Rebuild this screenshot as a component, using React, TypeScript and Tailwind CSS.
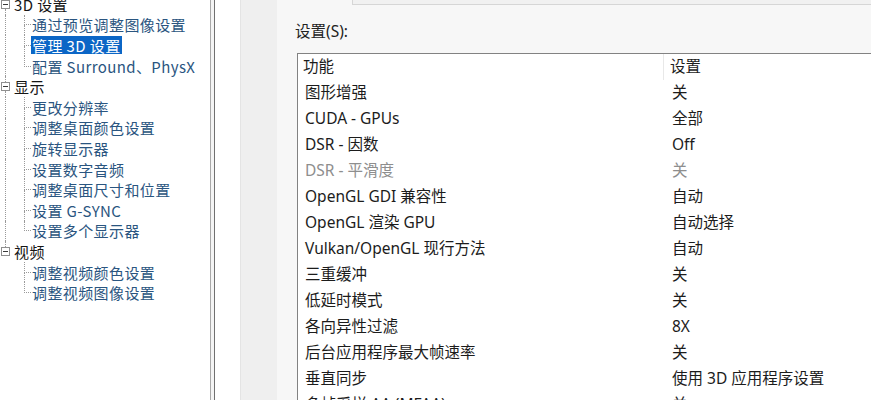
import React from "react";

type TreeRow = {
  label: string;
  root?: boolean;
  lastRoot?: boolean;
  lastChild?: boolean;
  selected?: boolean;
};

const tree: TreeRow[] = [
  { label: "3D 设置", root: true },
  { label: "通过预览调整图像设置" },
  { label: "管理 3D 设置", selected: true },
  { label: "配置 Surround、PhysX", lastChild: true },
  { label: "显示", root: true },
  { label: "更改分辨率" },
  { label: "调整桌面颜色设置" },
  { label: "旋转显示器" },
  { label: "设置数字音频" },
  { label: "调整桌面尺寸和位置" },
  { label: "设置 G-SYNC" },
  { label: "设置多个显示器", lastChild: true },
  { label: "视频", root: true, lastRoot: true },
  { label: "调整视频颜色设置", lastRoot: true },
  { label: "调整视频图像设置", lastRoot: true, lastChild: true },
];

const settings: { name: string; value: string; disabled?: boolean }[] = [
  { name: "图形增强", value: "关" },
  { name: "CUDA - GPUs", value: "全部" },
  { name: "DSR - 因数", value: "Off" },
  { name: "DSR - 平滑度", value: "关", disabled: true },
  { name: "OpenGL GDI 兼容性", value: "自动" },
  { name: "OpenGL 渲染 GPU", value: "自动选择" },
  { name: "Vulkan/OpenGL 现行方法", value: "自动" },
  { name: "三重缓冲", value: "关" },
  { name: "低延时模式", value: "关" },
  { name: "各向异性过滤", value: "8X" },
  { name: "后台应用程序最大帧速率", value: "关" },
  { name: "垂直同步", value: "使用 3D 应用程序设置" },
  { name: "多帧采样 AA (MFAA)", value: "关" },
];

const dotted = "border-dotted border-[#9a9a9a]";

function TreeLine({ row }: { row: TreeRow }) {
  if (row.root) {
    return (
      <div className="flex h-full w-[11px] flex-col items-center">
        <div className={`w-0 flex-1 border-l ${dotted}`} />
        <div className="flex h-[9px] w-[9px] shrink-0 items-center justify-center border border-[#8f8f8f] bg-white">
          <div className="h-px w-[5px] bg-[#3a3a3a]" />
        </div>
        <div className={`w-0 flex-1 ${row.lastRoot ? "" : `border-l ${dotted}`}`} />
      </div>
    );
  }
  return (
    <div className="flex h-full w-[11px] justify-center">
      {!row.lastRoot && <div className={`h-full w-0 border-l ${dotted}`} />}
    </div>
  );
}

function TreePanel() {
  return (
    <div
      className="w-[210px] shrink-0 overflow-hidden bg-white"
      style={{ fontFamily: '"Noto Sans CJK SC", "Noto Sans", sans-serif' }}
    >
      <div className="-mt-[6px]">
        {tree.map((row) => (
          <div key={row.label} className="flex h-[20.6px] items-center whitespace-nowrap text-[15px] tracking-[0.4px]">
            <TreeLine row={row} />
            {row.root ? (
              <span className="ml-[3px] leading-none text-[#151515]">{row.label}</span>
            ) : (
              <>
                <div className="w-[13px] shrink-0" />
                <div className="flex h-full w-[7px] shrink-0 flex-col">
                  <div className={`flex-1 border-b border-l ${dotted}`} />
                  <div className={`flex-1 ${row.lastChild ? "" : `border-l ${dotted}`}`} />
                </div>
                <span
                  className={`flex h-[18px] items-center px-[1px] leading-none ${
                    row.selected ? "bg-[#0b66c6] text-white" : "text-[#2a5580]"
                  }`}
                >
                  {row.label}
                </span>
              </>
            )}
          </div>
        ))}
      </div>
    </div>
  );
}

function SettingsList() {
  return (
    <div className="flex-1 overflow-hidden border-l border-t border-[#828282] bg-white text-[15.5px] text-[#1c1c1c]">
      <div className="flex h-[26px] items-center">
        <div className="w-[365px] shrink-0 pl-[5px]">功能</div>
        <div className="flex h-full items-center border-l border-[#e8e8e8] pl-[6px]">设置</div>
      </div>
      {settings.map((s) => (
        <div
          key={s.name}
          className={`flex h-[26px] items-center whitespace-nowrap ${s.disabled ? "text-[#8e8e8e]" : ""}`}
        >
          <div className="w-[365px] shrink-0 pl-[7px]">{s.name}</div>
          <div className="pl-[9px]">{s.value}</div>
        </div>
      ))}
    </div>
  );
}

export default function App() {
  return (
    <div
      className="flex h-[400px] w-[871px] overflow-hidden bg-white"
      style={{ fontFamily: '"Noto Sans", "Noto Sans CJK SC", sans-serif' }}
    >
      <TreePanel />
      <div className="h-full w-[5px] shrink-0 border-l border-r border-l-[#a8a8a8] border-r-[#707070] bg-[#f4f4f4]" />
      <div className="h-full w-[26px] shrink-0 border-r border-[#e4e4e4] bg-white" />
      <div className="flex min-w-0 flex-1 bg-[#f7f7f7]">
        <div className="h-full w-[36px] shrink-0 bg-[#efefef]" />
        <div className="flex min-w-0 flex-1 flex-col">
          <div className="flex h-[5px] shrink-0">
            <div className="w-[75px] shrink-0" />
            <div className="flex-1 border-b border-l border-[#d6d6d6] bg-[#f1f1f1]" />
          </div>
          <div className="mt-[16px] h-[20px] pl-[18px] text-[15.5px] leading-[20px] text-[#222]">设置(S):</div>
          <div className="mt-[12px] flex min-h-0 flex-1 pl-[20px]">
            <SettingsList />
          </div>
        </div>
      </div>
    </div>
  );
}
